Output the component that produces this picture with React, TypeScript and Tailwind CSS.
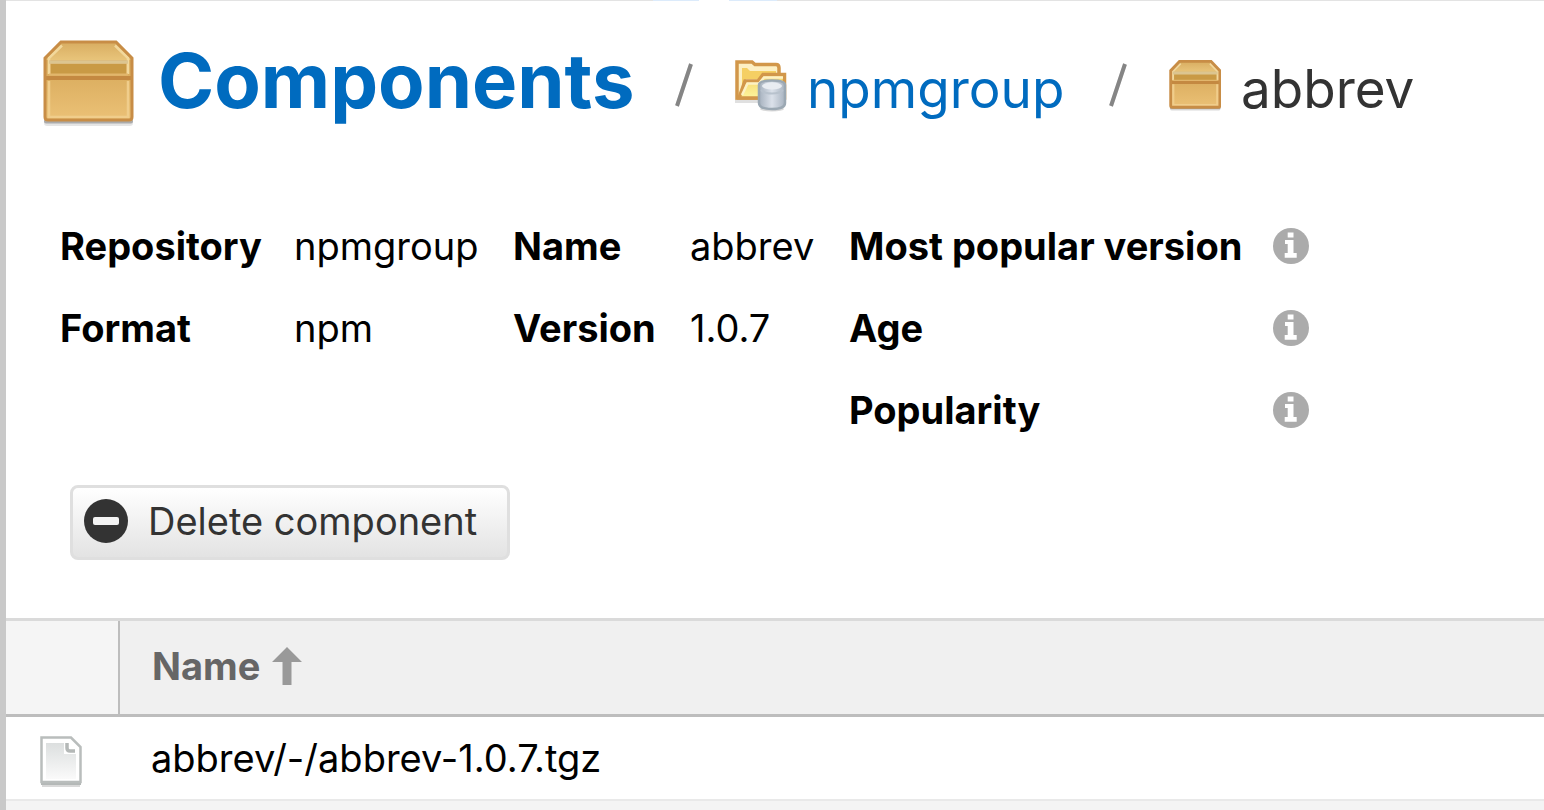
import React from "react";

function BoxIcon({ id, className, small = false }: { id: string; className: string; small?: boolean }) {
  const edge = small ? 5 : 3;
  const shine = small ? 5 : 2.5;
  return (
    <svg viewBox="0 0 92 88" className={className} aria-hidden="true" preserveAspectRatio="none">
      <defs>
        <linearGradient id={id + "-lid"} x1="0" y1="0" x2="0" y2="1">
          <stop offset="0" stopColor="#d9ae62" />
          <stop offset="1" stopColor="#e8c47a" />
        </linearGradient>
        <linearGradient id={id + "-body"} x1="0" y1="0" x2="0" y2="1">
          <stop offset="0" stopColor="#d0a050" />
          <stop offset="1" stopColor="#ebc176" />
        </linearGradient>
      </defs>
      <rect x="2" y="79" width="89" height="7" rx="3" fill="#000" opacity="0.1" />
      <rect x="2" y="79" width="89" height="4.500" rx="2" fill="#000" opacity="0.25" />
      <path d="M19 2H74L90 18V77Q90 80 87 80H6Q3 80 3 77V18Z" fill={"url(#" + id + "-body)"} />
      <path d="M19 3H74L89 20H4Z" fill={"url(#" + id + "-lid)"} />
      <path d="M20 5.500L7 18V34M73 5.500L86 18V34" fill="none" stroke="#f2d89c" strokeWidth={shine} />
      <rect x="9" y="24" width="75" height="11" fill="#c99a45" />
      <path d="M7 22H86" stroke="#dcc590" strokeWidth={small ? 5 : 3.5} />
      <path d="M7 34.500H86" stroke="#e2b66c" strokeWidth="2" />
      <path d="M7 41V77H86V41" fill="none" stroke="#f0cd8b" strokeWidth={shine} />
      <path d="M4 38H89" stroke="#c48941" strokeWidth={small ? 5 : 4} />
      <path d="M19 2H74L90 18V77Q90 80 87 80H6Q3 80 3 77V18Z" fill="none" stroke="#c88d46" strokeWidth={edge} />
    </svg>
  );
}

function FolderIcon() {
  return (
    <svg viewBox="0 0 52 52" className="h-[52px] w-[52px] shrink-0" aria-hidden="true">
      <defs>
        <linearGradient id="folder-fill" x1="0" y1="0" x2="0" y2="1">
          <stop offset="0" stopColor="#f5d266" />
          <stop offset="1" stopColor="#fdf59e" />
        </linearGradient>
        <linearGradient id="disk-fill" x1="0" y1="0" x2="1" y2="0">
          <stop offset="0" stopColor="#a6b1be" />
          <stop offset="0.500" stopColor="#dbe1ea" />
          <stop offset="1" stopColor="#a8b3c0" />
        </linearGradient>
      </defs>
      <path d="M0 39H24V43H0Z" fill="#000" opacity="0.12" />
      <path d="M2 2H17L20 4.500H41Q44 4.500 44 8V38H2Z" fill="#fdf0c4" stroke="#d2974a" strokeWidth="3.500" />
      <path d="M7 8H12L15 11H41V14H29L24 19H11L7 30Z" fill="#f5cf63" />
      <path d="M4 38L10 21H23L28 14.500H49.500V38Z" fill="url(#folder-fill)" stroke="#d2974a" strokeWidth="3.500" />
      <path d="M7 35L12.500 23.500H24L29 17.500H48" fill="none" stroke="#fdf1c4" strokeWidth="2.500" />
      <ellipse cx="37" cy="49" rx="12" ry="2.500" fill="#000" opacity="0.15" />
      <path d="M24 25Q24 20.500 37 20.500T50 25V43Q50 49 37 49T24 43Z" fill="url(#disk-fill)" stroke="#9ba8b3" strokeWidth="2.500" />
      <ellipse cx="37" cy="26" rx="10" ry="3.500" fill="#e9edf2" />
      <path d="M26 30Q29 33.500 37 33.500T48 30" fill="none" stroke="#b8c2cd" strokeWidth="2" />
    </svg>
  );
}

function InfoIcon() {
  return (
    <svg viewBox="0 0 36 36" className="h-9 w-9" role="img" aria-label="Info">
      <circle cx="18" cy="18" r="18" fill="#ababab" />
      <path d="M14.700 4.500H20.500V9.500H14.700ZM12 12H20.500V25H23.700V29.700H11.700V25H14.700V16H12Z" fill="#fff" />
    </svg>
  );
}

function FileIcon() {
  return (
    <svg viewBox="0 0 42 52" className="h-[52px] w-[42px]" aria-hidden="true">
      <defs>
        <linearGradient id="page-fill" x1="0" y1="0" x2="0" y2="1">
          <stop offset="0" stopColor="#dcdfdf" />
          <stop offset="1" stopColor="#fafafa" />
        </linearGradient>
      </defs>
      <path d="M1 45H41V49H1Z" fill="#b4b8b7" />
      <path d="M2 50H40" stroke="#000" strokeOpacity="0.15" strokeWidth="2" />
      <path d="M1.500 1.500H31L40.500 11V46H1.500Z" fill="#fff" stroke="#b9bdbc" strokeWidth="2.500" />
      <path d="M6 7H24V18H36V43H6Z" fill="url(#page-fill)" />
      <path d="M27 7V12Q27 15 30 15H35" fill="none" stroke="#b4b8b7" strokeWidth="3.500" />
    </svg>
  );
}

function Slash() {
  return (
    <svg viewBox="0 0 18 44" className="mt-[23px] h-11 w-[18px] shrink-0" aria-hidden="true">
      <path d="M2 43L16 1" stroke="#858585" strokeWidth="4" />
    </svg>
  );
}

export default function App() {
  return (
    <main className="min-h-screen overflow-hidden border-l-[6px] border-[#c9c9c9] bg-white font-['Inter',sans-serif] text-[38px] leading-[48px] text-black">
      <div className="flex h-px bg-[#e3e3e3] pl-[647px]">
        <span className="w-[46px] bg-[#dcebfb]" />
        <span className="w-[30px] bg-white" />
        <span className="w-[48px] bg-[#dcebfb]" />
      </div>

      <nav aria-label="Breadcrumb" className="flex items-start whitespace-nowrap pt-[39px] pl-9">
        <BoxIcon id="large-box" className="h-[88px] w-[92px] shrink-0" />
        <h1 className="ml-6 w-[517px] text-[76px] leading-[80px] font-bold text-[#006bbf]">
          <a href="#components">Components</a>
        </h1>
        <Slash />
        <div className="mt-5 ml-[42px] flex w-[374px] items-start">
          <FolderIcon />
          <a href="#npmgroup" className="mt-1 ml-5 text-[53px] leading-[50px] text-[#006bbf]">npmgroup</a>
        </div>
        <Slash />
        <div className="mt-5 ml-[42px] flex items-start">
          <BoxIcon id="small-box" small className="h-[52px] w-[52px] shrink-0" />
          <span className="mt-1 ml-5 text-[53px] leading-[50px] text-[#333]">abbrev</span>
        </div>
      </nav>

      <section className="flex whitespace-nowrap pt-[94px] pl-[54px]">
        <dl className="grid auto-rows-[48px] grid-cols-[234px_219px] gap-y-[34px]">
          <dt className="font-bold">Repository</dt><dd>npmgroup</dd>
          <dt className="font-bold">Format</dt><dd>npm</dd>
        </dl>
        <dl className="grid auto-rows-[48px] grid-cols-[177px_159px] gap-y-[34px]">
          <dt className="font-bold">Name</dt><dd>abbrev</dd>
          <dt className="font-bold">Version</dt><dd>1.0.7</dd>
        </dl>
        <dl className="grid auto-rows-[48px] grid-cols-[424px_36px] items-center gap-y-[34px]">
          <dt className="font-bold">Most popular version</dt><dd><InfoIcon /></dd>
          <dt className="font-bold">Age</dt><dd><InfoIcon /></dd>
          <dt className="font-bold">Popularity</dt><dd><InfoIcon /></dd>
        </dl>
      </section>

      <div className="pt-[51px] pb-[58px] pl-16">
        <button type="button" className="flex h-[75px] w-[440px] items-center rounded-lg border-[3px] border-[#dfdfdf] bg-linear-to-b from-white to-[#e3e3e3] pb-1 pl-[11px] whitespace-nowrap text-[#333]">
          <svg viewBox="0 0 44 44" className="mr-5 h-11 w-11 shrink-0" aria-hidden="true">
            <circle cx="22" cy="22" r="22" fill="#333" />
            <rect x="9" y="18" width="26" height="8" rx="2" fill="#f3f3f3" />
          </svg>
          Delete component
        </button>
      </div>

      <table className="w-full table-fixed border-collapse text-left">
        <colgroup><col className="w-[113px]" /><col /></colgroup>
        <thead>
          <tr className="h-[96px] border-t-[3px] border-b-[3px] border-t-[#dadada] border-b-[#bdbdbd]">
            <th aria-label="Type" className="border-r-2 border-[#bdbdbd] bg-[#f5f5f5]" />
            <th className="bg-[#f0f0f0] pb-1 pl-8 font-bold text-[#666]">
              <span className="flex items-center">
                Name
                <svg viewBox="0 0 30 38" className="ml-3 h-[38px] w-[30px]" aria-hidden="true">
                  <path d="M15 0L30 15H19.500V38H10.500V15H0Z" fill="#999" />
                </svg>
              </span>
            </th>
          </tr>
        </thead>
        <tbody>
          <tr className="h-[84px] border-b-2 border-[#e9e9e9]">
            <td className="pt-2 pl-[34px]"><FileIcon /></td>
            <td className="pl-8">abbrev/-/abbrev-1.0.7.tgz</td>
          </tr>
          <tr className="h-[10px] bg-[#f4f4f4]"><td colSpan={2} /></tr>
        </tbody>
      </table>
    </main>
  );
}
